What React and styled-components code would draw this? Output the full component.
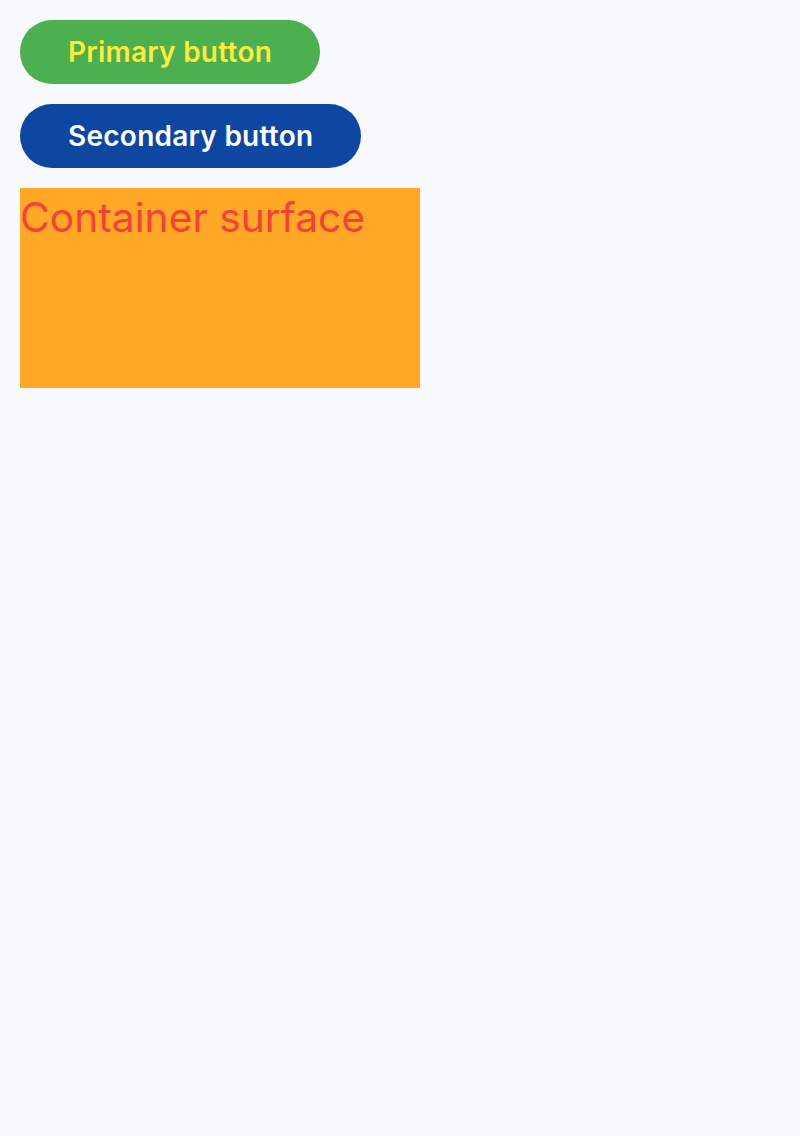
import React from 'react'
import styled, { createGlobalStyle } from 'styled-components'

const GlobalStyle = createGlobalStyle`
  html, body {
    margin: 0;
    padding: 0;
    background: #f7f9fd;
    font-family: Inter, 'Noto Sans', sans-serif;
  }
`

const Page = styled.div`
  display: flex;
  flex-direction: column;
  align-items: flex-start;
  gap: 20px;
  padding: 20px;
  min-height: 1136px;
  box-sizing: border-box;
`

const Button = styled.button`
  height: 64px;
  padding: 0 48px;
  border: none;
  border-radius: 32px;
  font-family: Inter, 'Noto Sans', sans-serif;
  font-size: 28px;
  font-weight: 600;
  letter-spacing: 0.25px;
  background: ${({ $bg }) => $bg};
  color: ${({ $fg }) => $fg};
  cursor: pointer;
`

const Surface = styled.div`
  width: 400px;
  height: 200px;
  background: #ffa726;
  color: #f44336;
  font-size: 40.75px;
  line-height: 1.45;
`

const App = () => (
  <>
    <GlobalStyle />
    <Page>
      <Button $bg='#4caf50' $fg='#ffeb3b'>Primary button</Button>
      <Button $bg='#0d47a1' $fg='#ffffff'>Secondary button</Button>
      <Surface>Container surface</Surface>
    </Page>
  </>
)

export default App
